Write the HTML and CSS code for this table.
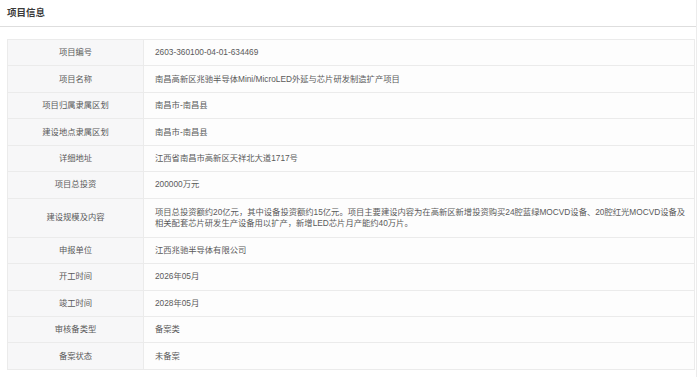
FILE: index.html
```html
<!DOCTYPE html>
<html lang="zh-CN">
<head>
<meta charset="utf-8">
<title>项目信息</title>
<link rel="stylesheet" href="styles.css">
</head>
<body>
<div class="page">
  <div class="header"><span class="title">项目信息</span></div>
  <div class="table">
    <div class="label">项目编号</div><div class="value">2603-360100-04-01-634469</div>
    <div class="label">项目名称</div><div class="value">南昌高新区兆驰半导体Mini/MicroLED外延与芯片研发制造扩产项目</div>
    <div class="label">项目归属隶属区划</div><div class="value">南昌市-南昌县</div>
    <div class="label">建设地点隶属区划</div><div class="value">南昌市-南昌县</div>
    <div class="label">详细地址</div><div class="value">江西省南昌市高新区天祥北大道1717号</div>
    <div class="label">项目总投资</div><div class="value">200000万元</div>
    <div class="label">建设规模及内容</div><div class="value multi">项目总投资额约20亿元，其中设备投资额约15亿元。项目主要建设内容为在高新区新增投资购买24腔蓝绿MOCVD设备、20腔红光MOCVD设备及<br>相关配套芯片研发生产设备用以扩产，新增LED芯片月产能约40万片。</div>
    <div class="label">申报单位</div><div class="value">江西兆驰半导体有限公司</div>
    <div class="label">开工时间</div><div class="value">2026年05月</div>
    <div class="label">竣工时间</div><div class="value">2028年05月</div>
    <div class="label">审核备类型</div><div class="value">备案类</div>
    <div class="label">备案状态</div><div class="value">未备案</div>
  </div>
</div>
</body>
</html>
```

FILE: styles.css
```css
html, body {
  margin: 0;
  padding: 0;
  background: #ffffff;
}

body {
  font-family: "Liberation Sans", Arial, "Noto Sans CJK SC", sans-serif;
  color: #555;
}

.page {
  width: 696px;
  height: 377px;
  border-right: 1px solid #ececec;
}

.header {
  height: 27px;
  border-bottom: 1px solid #dedede;
  padding-left: 7px;
  display: flex;
  align-items: center;
  box-sizing: border-box;
}

.title {
  font-size: 9.5px;
  font-weight: bold;
  color: #3a3a3a;
  position: relative;
  top: -1px;
}

.table {
  margin: 12px 1px 0 7px;
  display: grid;
  grid-template-columns: 136px 1fr;
  grid-template-rows: repeat(6, 26.45px) 39px repeat(5, 26.45px);
  border: 1px solid #ebebeb;
  border-bottom: none;
  font-size: 8.3px;
  line-height: 11px;
}

.label,
.value {
  display: flex;
  align-items: center;
  border-bottom: 1px solid #ebebeb;
  box-sizing: border-box;
  min-width: 0;
}

.label {
  justify-content: center;
  background: #f7f7f8;
  border-right: 1px solid #ebebeb;
  color: #5a5a5a;
}

.value {
  padding-left: 11px;
  background: #fdfdfd;
  color: #5a5a5a;
}

.multi {
  display: block;
  white-space: nowrap;
  padding-top: 8px;
}
```
